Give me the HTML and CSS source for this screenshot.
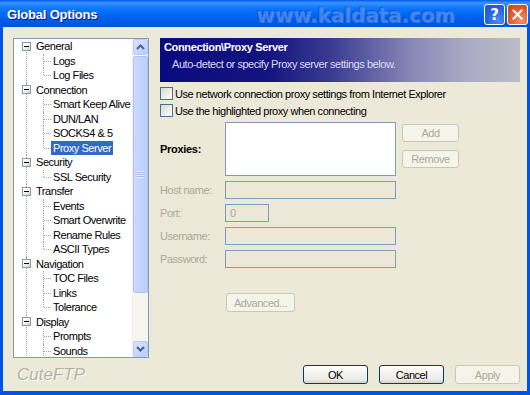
FILE: index.html
```html
<!DOCTYPE html>
<html lang="en">
<head>
    <meta charset="UTF-8">
    <title>Global Options</title>
    <link rel="stylesheet" href="styles.css">
</head>
<body>
    <div class="window">
        <div class="titlebar">
            <span class="title">Global Options</span>
            <span class="watermark">www.kaldata.com</span>
            <div class="caption-buttons">
                <span class="cap-btn help">?</span>
                <span class="cap-btn close">
                    <svg width="11" height="11" viewBox="0 0 11 11"><path d="M1.5 1.5 L9.5 9.5 M9.5 1.5 L1.5 9.5" stroke="#fff" stroke-width="2" stroke-linecap="square"/></svg>
                </span>
            </div>
        </div>

        <div class="client">
            <div class="main">
                <div class="tree">
                    <ul class="tree-list">
                        <li class="group first">
                            <div class="node"><span class="expander"></span><span class="label">General</span></div>
                            <ul class="children">
                                <li class="leaf"><span class="label">Logs</span></li>
                                <li class="leaf last"><span class="label">Log Files</span></li>
                            </ul>
                        </li>
                        <li class="group">
                            <div class="node"><span class="expander"></span><span class="label">Connection</span></div>
                            <ul class="children">
                                <li class="leaf"><span class="label">Smart Keep Alive</span></li>
                                <li class="leaf"><span class="label">DUN/LAN</span></li>
                                <li class="leaf"><span class="label">SOCKS4 &amp; 5</span></li>
                                <li class="leaf last"><span class="label selected">Proxy Server</span></li>
                            </ul>
                        </li>
                        <li class="group">
                            <div class="node"><span class="expander"></span><span class="label">Security</span></div>
                            <ul class="children">
                                <li class="leaf last"><span class="label">SSL Security</span></li>
                            </ul>
                        </li>
                        <li class="group">
                            <div class="node"><span class="expander"></span><span class="label">Transfer</span></div>
                            <ul class="children">
                                <li class="leaf"><span class="label">Events</span></li>
                                <li class="leaf"><span class="label">Smart Overwrite</span></li>
                                <li class="leaf"><span class="label">Rename Rules</span></li>
                                <li class="leaf last"><span class="label">ASCII Types</span></li>
                            </ul>
                        </li>
                        <li class="group">
                            <div class="node"><span class="expander"></span><span class="label">Navigation</span></div>
                            <ul class="children">
                                <li class="leaf"><span class="label">TOC Files</span></li>
                                <li class="leaf"><span class="label">Links</span></li>
                                <li class="leaf last"><span class="label">Tolerance</span></li>
                            </ul>
                        </li>
                        <li class="group">
                            <div class="node"><span class="expander"></span><span class="label">Display</span></div>
                            <ul class="children">
                                <li class="leaf"><span class="label">Prompts</span></li>
                                <li class="leaf"><span class="label">Sounds</span></li>
                            </ul>
                        </li>
                    </ul>
                    <div class="scrollbar">
                        <span class="sb-btn">
                            <svg width="9" height="6" viewBox="0 0 9 6"><path d="M1 5 L4.5 1.5 L8 5" fill="none" stroke="#4d6185" stroke-width="2"/></svg>
                        </span>
                        <div class="sb-track">
                            <div class="sb-thumb"><span class="grip"></span></div>
                        </div>
                        <span class="sb-btn">
                            <svg width="9" height="6" viewBox="0 0 9 6"><path d="M1 1 L4.5 4.5 L8 1" fill="none" stroke="#4d6185" stroke-width="2"/></svg>
                        </span>
                    </div>
                </div>

                <div class="panel">
                    <div class="panel-header">
                        <div class="panel-title">Connection\Proxy Server</div>
                        <div class="panel-desc">Auto-detect or specify Proxy server settings below.</div>
                    </div>

                    <label class="check"><span class="checkbox"></span>Use network connection proxy settings from Internet Explorer</label>
                    <label class="check"><span class="checkbox"></span>Use the highlighted proxy when connecting</label>

                    <div class="form">
                        <span class="field-label strong">Proxies:</span>
                        <div class="listbox"></div>
                        <div class="list-buttons">
                            <span class="button disabled">Add</span>
                            <span class="button disabled">Remove</span>
                        </div>

                        <span class="field-label">Host name:</span>
                        <span class="input"></span>

                        <span class="field-label">Port:</span>
                        <span class="input short">0</span>

                        <span class="field-label">Username:</span>
                        <span class="input"></span>

                        <span class="field-label">Password:</span>
                        <span class="input"></span>
                    </div>

                    <span class="button disabled advanced">Advanced...</span>
                </div>
            </div>

            <div class="footer">
                <span class="brand">CuteFTP</span>
                <span class="button wide">OK</span>
                <span class="button wide">Cancel</span>
                <span class="button wide disabled">Apply</span>
            </div>
        </div>
    </div>
</body>
</html>
```

FILE: styles.css
```css
:root {
    --face: #ece9d8;
    --frame: #0054e3;
    --field-border: #7f9db9;
    --disabled: #aca899;
    --select: #316ac5;
    --tree-line: #a0a0a0;
}

* {
    box-sizing: border-box;
    margin: 0;
    padding: 0;
}

body {
    width: 530px;
    height: 395px;
    overflow: hidden;
    font-family: 'Liberation Sans', Arial, sans-serif;
    font-size: 11px;
    letter-spacing: -0.45px;
    color: #000;
    background: var(--face);
}

.window {
    width: 530px;
    height: 395px;
    display: flex;
    flex-direction: column;
}

/* title bar */
.titlebar {
    position: relative;
    height: 27px;
    flex: none;
    display: flex;
    align-items: center;
    padding: 1px 2px 0 7px;
    background: linear-gradient(to bottom, #0058ee 0%, #3a93ff 10%, #2889ff 18%, #0f78fb 30%, #036bf5 50%, #025fea 70%, #0056e2 90%, #0050d8 100%);
}

.title {
    font-size: 13px;
    font-weight: bold;
    letter-spacing: -0.2px;
    color: #fff;
    text-shadow: 1px 1px 0 #0a1883;
}

.watermark {
    position: absolute;
    left: 256px;
    top: 3px;
    font-family: 'DejaVu Sans', sans-serif;
    font-size: 20px;
    font-weight: bold;
    letter-spacing: -0.1px;
    color: rgba(110, 160, 255, 0.45);
    text-shadow: -1px -1px 0 rgba(0, 40, 160, 0.3), 1px 1px 0 rgba(160, 200, 255, 0.3);
}

.caption-buttons {
    margin-left: auto;
    display: flex;
    gap: 2px;
    margin-top: 1px;
}

.cap-btn {
    width: 21px;
    height: 21px;
    border: 1px solid #fff;
    border-radius: 3px;
    display: flex;
    align-items: center;
    justify-content: center;
    color: #fff;
    font-family: 'DejaVu Sans', sans-serif;
    font-weight: bold;
    font-size: 15px;
    letter-spacing: 0;
}

.help {
    background: radial-gradient(circle at 70% 80%, #4a8cf8, #2663e0 55%, #1c55d4);
}

.close {
    background: radial-gradient(circle at 70% 80%, #f09070, #e25a2e 55%, #c8421a);
}

/* client area */
.client {
    flex: 1;
    display: flex;
    flex-direction: column;
    background: var(--face);
    border-style: solid;
    border-color: var(--frame);
    border-width: 0 3px 4px 3px;
}

.main {
    display: flex;
    gap: 11px;
    padding: 11px 7px 0 10px;
}

/* tree view */
.tree {
    width: 136px;
    height: 320px;
    display: flex;
    border: 1px solid var(--field-border);
    background: #fff;
    overflow: hidden;
}

.tree-list {
    flex: 1;
    list-style: none;
    overflow: hidden;
}

.tree-list ul {
    list-style: none;
}

.group {
    position: relative;
}

.group::before {
    content: "";
    position: absolute;
    left: 12px;
    top: 0;
    bottom: 0;
    border-left: 1px dotted var(--tree-line);
}

.group.first::before {
    top: 7px;
}

.node,
.leaf {
    height: 14.5px;
    display: flex;
    align-items: center;
    white-space: nowrap;
}

.node {
    padding-left: 8px;
}

.expander {
    position: relative;
    z-index: 1;
    width: 9px;
    height: 9px;
    margin-right: 3px;
    border: 1px solid #8a99a6;
    background: linear-gradient(135deg, #fff 30%, #d4d0c2);
}

.expander::after {
    content: "";
    position: absolute;
    left: 1px;
    top: 3px;
    width: 5px;
    height: 1px;
    background: #000;
}

.label {
    padding: 0 2px;
    line-height: 14px;
}

.leaf {
    position: relative;
    padding-left: 37px;
}

.leaf::before {
    content: "";
    position: absolute;
    left: 29px;
    top: 0;
    bottom: 0;
    border-left: 1px dotted var(--tree-line);
}

.leaf.last::before {
    bottom: 50%;
}

.leaf::after {
    content: "";
    position: absolute;
    left: 30px;
    top: 50%;
    width: 7px;
    border-top: 1px dotted var(--tree-line);
}

.selected {
    background: var(--select);
    color: #fff;
}

/* scrollbar */
.scrollbar {
    width: 16px;
    flex: none;
    display: flex;
    flex-direction: column;
    background: #f6f5f0;
    border-left: 1px solid #f0efe8;
}

.sb-btn {
    height: 16px;
    flex: none;
    display: flex;
    align-items: center;
    justify-content: center;
    border: 1px solid #b8cbf6;
    border-radius: 2px;
    background: linear-gradient(135deg, #d8e4fe, #b8cdfa);
}

.sb-track {
    flex: 1;
    padding: 1px 0;
}

.sb-thumb {
    height: 237px;
    display: flex;
    align-items: center;
    justify-content: center;
    border: 1px solid #b0c4f2;
    border-radius: 2px;
    background: linear-gradient(to right, #cbd9fd, #bccffb);
}

.grip {
    width: 7px;
    height: 7px;
    background: repeating-linear-gradient(to bottom, #eef3ff 0 1px, #9fb6ec 1px 2px);
}

/* right panel */
.panel {
    width: 360px;
    display: flex;
    flex-direction: column;
}

.panel-header {
    height: 44px;
    padding: 2px 4px;
    color: #fff;
    background: linear-gradient(to right, #0a0a80 0%, #14147f 30%, #3c3c92 48%, #8888b8 70%, #aaaac4 85%, #bcbcc8 100%);
}

.panel-title {
    font-weight: bold;
    line-height: 14px;
    letter-spacing: -0.35px;
}

.panel-desc {
    padding-left: 8px;
    margin-top: 3px;
    line-height: 14px;
    color: #dcdcf0;
}

.check {
    height: 17px;
    display: flex;
    align-items: center;
    gap: 1px;
}

.check:first-of-type {
    margin-top: 3px;
}

.checkbox {
    width: 13px;
    height: 13px;
    margin-right: 1px;
    border: 1px solid #4d6f9c;
    background: linear-gradient(135deg, #d8d8d2, #fff);
}

.form {
    margin-top: 3px;
    display: grid;
    grid-template-columns: 65px 171px 63px;
    row-gap: 5px;
    align-items: center;
}

.field-label {
    grid-column: 1;
    color: var(--disabled);
}

.field-label.strong {
    color: #000;
    font-weight: bold;
    letter-spacing: -0.3px;
}

.listbox {
    height: 54px;
    border: 1px solid var(--field-border);
    background: #fff;
}

.list-buttons {
    align-self: start;
    margin-left: 6px;
    margin-top: 2px;
    display: flex;
    flex-direction: column;
    gap: 8px;
}

.input {
    grid-column: 2;
    height: 18px;
    padding-left: 4px;
    line-height: 16px;
    border: 1px solid var(--field-border);
    background: var(--face);
    color: var(--disabled);
}

.input.short {
    width: 44px;
}

.button {
    height: 18px;
    display: flex;
    align-items: center;
    justify-content: center;
    border: 1px solid #003c74;
    border-radius: 3px;
    background: linear-gradient(to bottom, #fff 0%, #f4f3ee 40%, #ecebe6 80%, #d6d0c5 100%);
}

.button.disabled {
    border-color: #c9c7ba;
    background: #f5f4ea;
    color: var(--disabled);
}

.advanced {
    width: 69px;
    height: 19px;
    margin: 25px 0 0 66px;
}

/* footer */
.footer {
    flex: 1;
    display: flex;
    align-items: center;
    gap: 11px;
    padding: 0 7px 0 14px;
}

.brand {
    margin-right: auto;
    font-size: 17px;
    font-style: italic;
    letter-spacing: 0;
    color: #b5b1a2;
    text-shadow: 1px 1px 0 #fff;
}

.button.wide {
    width: 65px;
    height: 19px;
}
```
